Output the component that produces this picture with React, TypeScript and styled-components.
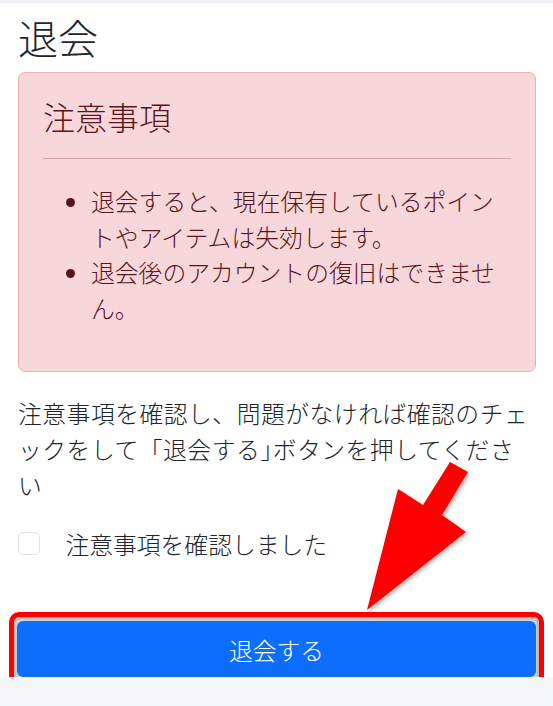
import React from 'react';
import styled, { createGlobalStyle } from 'styled-components';

const GlobalStyle = createGlobalStyle`
  body {
    margin: 0;
    background-color: #f6f7f9;
    font-family: "Noto Sans CJK JP", "Noto Sans", sans-serif;
    color: #212529;
  }
`;

const Page = styled.div`
  position: relative;
  width: 553px;
`;

const TopBar = styled.div`
  height: 3px;
  background-color: #eef0f7;
`;

const Main = styled.main`
  background-color: #ffffff;
  padding: 10px 17px 0 18px;
`;

const Title = styled.h1`
  margin: 0 0 11px;
  font-size: 40px;
  line-height: 48px;
  font-weight: 300;
`;

const Alert = styled.section`
  margin-bottom: 23px;
  padding: 23.5px 24px;
  border: 1px solid #f1aeb5;
  border-radius: 7px;
  background-color: #f8d7da;
  color: #58151c;
`;

const AlertHeading = styled.h2`
  margin: 0 0 11.7px;
  font-size: 32px;
  line-height: 1.2;
  font-weight: 300;
`;

const Divider = styled.hr`
  margin: 23.5px 0;
  border: 0;
  border-top: 1px solid #58151c;
  opacity: 0.25;
`;

const NoteList = styled.ul`
  margin: 0 0 22px;
  padding-left: 48px;
  font-size: 23.8px;
  line-height: 35.7px;
  font-weight: 300;
`;

const Notice = styled.p`
  margin: 0 0 23.5px;
  font-size: 23.8px;
  line-height: 35.7px;
  font-weight: 300;
  letter-spacing: 0.5px;
`;

// the closing bracket sits tight against the next word, as in the original
const TightBracket = styled.span`
  font-feature-settings: "halt";
`;

const CheckRow = styled.label`
  display: flex;
  align-items: center;
  gap: 25px;
  font-size: 23.8px;
  line-height: 35.7px;
  font-weight: 300;
`;

const CheckBox = styled.input.attrs({ type: 'checkbox' })`
  appearance: none;
  width: 22.4px;
  height: 22.4px;
  margin: 0;
  border: 1px solid #dee2e6;
  border-radius: 5px;
  background-color: #ffffff;
`;

const ActionArea = styled.div`
  position: relative;
  margin-top: 59.7px;
`;

const Highlight = styled.div`
  position: absolute;
  top: -9px;
  left: -9px;
  right: -8px;
  bottom: -10px;
  border: 5px solid #ff0000;
  border-radius: 10px;
  background-color: #dcdcdc;
  box-shadow: inset 0 0 4px 1px rgba(0, 0, 0, 0.3);
  pointer-events: none;
`;

const SubmitButton = styled.button`
  position: relative;
  display: block;
  width: calc(100% + 1px);
  height: 56px;
  margin-left: -1px;
  border: 0;
  border-radius: 6px;
  background-color: #0d6efd;
  color: #ffffff;
  font-family: inherit;
  font-size: 23.8px;
  font-weight: 300;
`;

const Arrow = styled.svg`
  position: absolute;
  left: 355px;
  top: 455px;
  width: 125px;
  height: 165px;
  filter: drop-shadow(2px 2px 2px rgba(0, 0, 0, 0.3));
  pointer-events: none;
`;

const notes = [
  '退会すると、現在保有しているポイントやアイテムは失効します。',
  '退会後のアカウントの復旧はできません。',
];

const App: React.FC = () => {
  return (
    <>
      <GlobalStyle />
      <Page>
        <TopBar />
        <Main>
          <Title>退会</Title>
          <Alert>
            <AlertHeading>注意事項</AlertHeading>
            <Divider />
            <NoteList>
              {notes.map((note) => (
                <li key={note}>{note}</li>
              ))}
            </NoteList>
          </Alert>
          <Notice>
            注意事項を確認し、問題がなければ確認のチェックをして「退会する
            <TightBracket>」</TightBracket>ボタンを押してください
          </Notice>
          <CheckRow>
            <CheckBox />
            注意事項を確認しました
          </CheckRow>
          <ActionArea>
            <Highlight />
            <SubmitButton type="button">退会する</SubmitButton>
          </ActionArea>
        </Main>
        <Arrow viewBox="355 455 125 165">
          <polygon
            points="450,462 468,472 442,515 466,532 367,610 398,489 423,505"
            fill="#ff0000"
          />
        </Arrow>
      </Page>
    </>
  );
};

export default App;
